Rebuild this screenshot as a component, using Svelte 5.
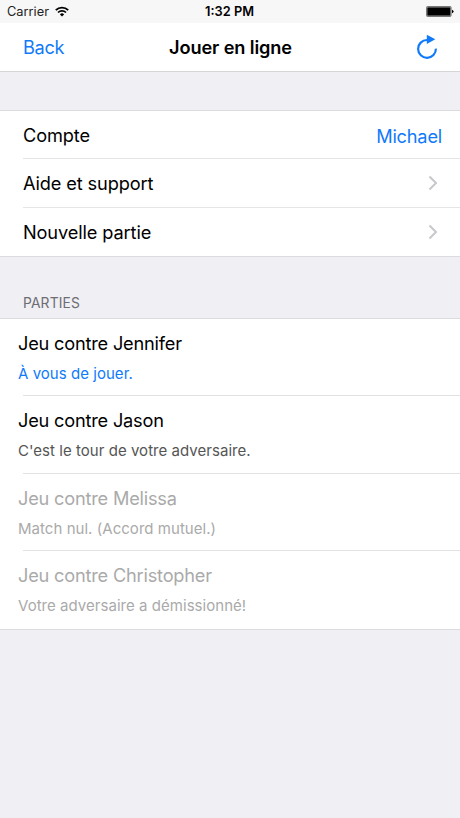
<script>
    let account = "Michael";

    const links = [
        { label: "Aide et support" },
        { label: "Nouvelle partie" }
    ];

    const games = [
        { title: "Jeu contre Jennifer", status: "À vous de jouer.", state: "active" },
        { title: "Jeu contre Jason", status: "C'est le tour de votre adversaire.", state: "waiting" },
        { title: "Jeu contre Melissa", status: "Match nul. (Accord mutuel.)", state: "done" },
        { title: "Jeu contre Christopher", status: "Votre adversaire a démissionné!", state: "done" }
    ];
</script>

<div class="screen">
    <header>
        <div class="status-bar">
            <div class="carrier">
                <span>Carrier</span>
                <svg width="14" height="11" viewBox="0 0 14 11">
                    <path d="M0.8 4.1 A8.8 8.8 0 0 1 13.2 4.1" fill="none" stroke="#000" stroke-width="1.8" />
                    <path d="M3 6.5 A5.7 5.7 0 0 1 11 6.5" fill="none" stroke="#000" stroke-width="1.7" />
                    <path d="M4.9 8.4 A3 3 0 0 1 9.1 8.4 L7 10.5 Z" fill="#000" />
                </svg>
            </div>
            <div class="time">1:32 PM</div>
            <div class="battery">
                <svg width="28" height="11" viewBox="0 0 28 11">
                    <rect x="0.5" y="0.5" width="24.6" height="10" rx="1" fill="#999" stroke="#777" stroke-width="1" />
                    <rect x="1.4" y="1.4" width="22.8" height="8.2" rx="0.6" fill="#000" />
                    <path d="M26 3.7 Q27.6 4.2 27.6 5.5 Q27.6 6.8 26 7.3 Z" fill="#000" />
                </svg>
            </div>
        </div>
        <nav>
            <a class="back" href="#back">Back</a>
            <h1>Jouer en ligne</h1>
            <button class="refresh" aria-label="Actualiser">
                <svg width="22" height="26" viewBox="0 0 22 26">
                    <path d="M12 6 H11 A8.9 8.9 0 1 0 19.9 14.6" fill="none" stroke="#107afb" stroke-width="2.2" />
                    <path d="M10.8 0.8 L19.3 5.2 L10.8 9.9 Z" fill="#107afb" />
                </svg>
            </button>
        </nav>
    </header>

    <ul class="menu">
        <li>
            <span>Compte</span>
            <span class="account">{account}</span>
        </li>
        {#each links as link}
        <li>
            <span>{link.label}</span>
            <svg class="chevron" width="10" height="16" viewBox="0 0 10 16">
                <path d="M1.5 1.5 L8 8 L1.5 14.5" fill="none" stroke="#c7c7cc" stroke-width="2" />
            </svg>
        </li>
        {/each}
    </ul>

    <h2>PARTIES</h2>
    <ul class="games">
        {#each games as game}
        <li class={game.state}>
            <div class="title">{game.title}</div>
            <div class="status">{game.status}</div>
        </li>
        {/each}
    </ul>
</div>

<style>
    :global(body) {
        background: #efeff4;
    }
    .screen {
        min-height: 818px;
        background: #efeff4;
        color: #000;
        font-family: Inter, "Liberation Sans", sans-serif;
        font-size: 18.2px;
        letter-spacing: -0.12px;
    }
    header {
        background: #fff;
        border-bottom: 1px solid #d5d5d8;
    }
    .status-bar {
        display: grid;
        grid-template-columns: 1fr auto 1fr;
        align-items: center;
        box-sizing: border-box;
        height: 23px;
        padding: 0 6px 0 7px;
        background: #f7f7f7;
        font-size: 12.8px;
        letter-spacing: 0;
    }
    .carrier {
        display: flex;
        align-items: center;
        gap: 6px;
        color: #222;
    }
    .time {
        margin-right: 2px;
        font-weight: 600;
    }
    .battery {
        display: flex;
        justify-content: flex-end;
    }
    svg {
        display: block;
    }
    nav {
        display: grid;
        grid-template-columns: 1fr auto 1fr;
        align-items: center;
        height: 48px;
        padding: 0 22px 0 23px;
    }
    .back {
        padding-bottom: 1px;
        color: #107afb;
        letter-spacing: -0.3px;
        text-decoration: none;
    }
    h1 {
        margin: 0;
        padding-bottom: 1px;
        font-size: 18.2px;
        font-weight: 600;
    }
    .refresh {
        justify-self: end;
        padding: 0;
        border: 0;
        background: none;
    }
    ul {
        margin: 0;
        padding: 0;
        list-style: none;
        background: #fff;
        border-top: 1px solid #dcdce0;
        border-bottom: 1px solid #dcdce0;
    }
    .menu {
        margin-top: 38px;
        padding-left: 23px;
    }
    .menu li {
        display: flex;
        align-items: center;
        justify-content: space-between;
        box-sizing: border-box;
        height: 49px;
        padding-right: 18px;
    }
    .menu li:first-child {
        height: 47px;
    }
    .menu li + li {
        border-top: 1px solid #e5e5e7;
    }
    .account {
        padding-top: 3px;
        color: #107afb;
        letter-spacing: -0.2px;
    }
    .chevron {
        margin-right: 4px;
    }
    h2 {
        box-sizing: border-box;
        height: 61px;
        margin: 0;
        padding: 36px 23px 0;
        color: #6d6d72;
        font-size: 13.8px;
        font-weight: 400;
        letter-spacing: 0.15px;
        line-height: 20px;
    }
    .games li {
        position: relative;
        box-sizing: border-box;
        height: 77.67px;
        padding: 11px 18px 0;
    }
    .games li:first-child {
        height: 77px;
    }
    .games li + li::before {
        content: "";
        position: absolute;
        top: -1px;
        left: 23px;
        right: 0;
        height: 1px;
        background: #e2e2e4;
    }
    .title {
        letter-spacing: -0.2px;
        line-height: 26px;
    }
    .status {
        margin-top: 8px;
        font-size: 15px;
        letter-spacing: 0.04px;
        line-height: 20px;
    }
    .active .status {
        color: #107afb;
    }
    .waiting .status {
        color: #555;
    }
    .done {
        color: #aaa;
    }
</style>
